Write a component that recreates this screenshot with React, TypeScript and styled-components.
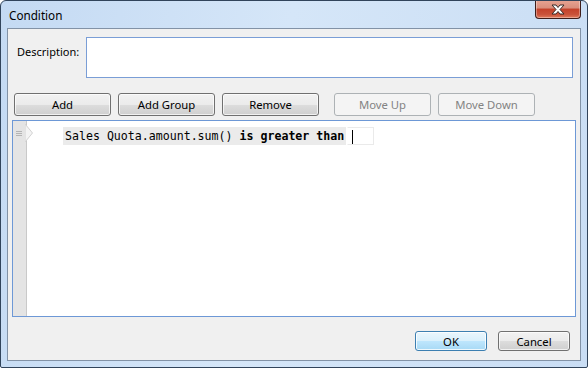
import React from 'react'
import styled, { createGlobalStyle, css } from 'styled-components'

const Global = createGlobalStyle`
  html, body {
    margin: 0;
    padding: 0;
    background: #fff;
  }
  body {
    font-family: "Noto Sans", "Open Sans", sans-serif;
    font-size: 12px;
  }
`

const Window = styled.div`
  width: 588px;
  height: 368px;
  box-sizing: border-box;
  border: 1px solid #31445b;
  border-radius: 6px 6px 2px 2px;
  background: linear-gradient(100deg, #c4daf3 0%, #d5e6f8 45%, #c9ddf4 100%);
  display: flex;
  flex-direction: column;
  padding: 0 6px 6px;
  overflow: hidden;
`

const TitleBar = styled.div`
  height: 27px;
  display: flex;
  align-items: flex-start;
  position: relative;
`

const Title = styled.span`
  margin: 6px 0 0 2px;
  font-size: 11.7px;
  color: #000;
`

const CloseButton = styled.div`
  position: absolute;
  top: -1px;
  right: 0;
  width: 46px;
  height: 19px;
  box-sizing: border-box;
  border: 1px solid #3e1d1a;
  border-top: none;
  border-radius: 0 0 4px 4px;
  background: linear-gradient(#e8a493 0%, #d98e7c 45%, #c4412a 50%, #c9523a 80%, #e07a5c 100%);
  box-shadow: inset 0 0 0 1px rgba(255, 255, 255, 0.35);
  display: flex;
  align-items: center;
  justify-content: center;
`

const Client = styled.div`
  flex: 1;
  border: 1px solid #8292a6;
  background: #f0f0f0;
  display: flex;
  flex-direction: column;
  padding: 8px 7px 9px 5px;
`

const DescRow = styled.div`
  display: flex;
  align-items: flex-start;
  padding-left: 4px;
`

const Label = styled.label`
  width: 69px;
  margin-top: 7px;
  font-size: 11px;
  color: #000;
`

const TextBox = styled.div`
  flex: 1;
  height: 41px;
  box-sizing: border-box;
  border: 1px solid #7a9ed6;
  background: #fff;
`

const ButtonRow = styled.div`
  display: flex;
  gap: 7px;
  margin: 15px 0 0 1px;
`

const Button = styled.button<{ $primary?: boolean; $wide?: boolean; $apart?: boolean }>`
  width: ${p => (p.$wide ? '97px' : '72px')};
  height: ${p => (p.$wide ? '23px' : '20px')};
  margin-left: ${p => (p.$apart ? '8px' : '0')};
  box-sizing: border-box;
  padding: 0;
  font-family: "Noto Sans", "Open Sans", sans-serif;
  font-size: 11.3px;
  color: #000;
  border: 1px solid #707070;
  border-radius: 3px;
  background: linear-gradient(#f2f2f2 0%, #ebebeb 50%, #dddddd 51%, #cfcfcf 100%);
  box-shadow: inset 0 0 0 1px rgba(255, 255, 255, 0.7);
  ${p =>
    p.$primary &&
    css`
      border-color: #3c7fb1;
      background: linear-gradient(#eaf6fd 0%, #d9f0fc 50%, #bee6fd 51%, #a7d9f5 100%);
      box-shadow: inset 0 0 0 1px rgba(255, 255, 255, 0.8);
    `}
  &:disabled {
    color: #838383;
    border-color: #adb2b5;
    background: #f4f4f4;
    box-shadow: none;
  }
`

const Editor = styled.div`
  margin: 4px -3px 0 -1px;
  height: 197px;
  box-sizing: border-box;
  border: 1px solid #6d98d6;
  background: #fff;
  display: flex;
`

const Gutter = styled.div`
  width: 13px;
  background: #e4e4e4;
  border-right: 1px solid #c9c9c9;
  position: relative;
`

const Grip = styled.svg`
  position: absolute;
  top: 10px;
  left: 3px;
`

const RowArrow = styled.svg`
  position: absolute;
  top: 2px;
  left: 12px;
`

const Lines = styled.div`
  flex: 1;
  padding: 6px 0 0 36px;
`

const Line = styled.div`
  display: flex;
  align-items: center;
  font-family: "DejaVu Sans Mono", "Liberation Mono", monospace;
  font-size: 11.6px;
  color: #000;
`

const Expr = styled.span`
  background: #ebebeb;
  height: 18px;
  line-height: 18px;
  padding: 0 2px;
`

const Op = styled.b`
  font-weight: bold;
`

const ValueBox = styled.span`
  width: 27px;
  height: 18px;
  box-sizing: border-box;
  border: 1px solid #eaeaea;
  border-left-color: #fff;
  background: #fff;
  position: relative;
  margin-left: 1px;
  &::before {
    content: '';
    position: absolute;
    left: 4px;
    top: 2px;
    width: 1px;
    height: 14px;
    background: #000;
  }
`

const Footer = styled.div`
  margin-top: auto;
  display: flex;
  justify-content: flex-end;
  gap: 11px;
  padding-right: 3px;
`

export default function App() {
  return (
    <>
      <Global />
      <Window>
        <TitleBar>
          <Title>Condition</Title>
          <CloseButton>
            <svg width="16" height="11" viewBox="0 0 16 11">
              <path
                d="M2 1 H6 L8 3.5 L10 1 H14 L10 5.5 L14 10 H10 L8 7.5 L6 10 H2 L6 5.5 Z"
                fill="#fff"
                stroke="#3a2a28"
                strokeWidth="1"
                strokeLinejoin="round"
              />
            </svg>
          </CloseButton>
        </TitleBar>
        <Client>
          <DescRow>
            <Label>Description:</Label>
            <TextBox />
          </DescRow>
          <ButtonRow>
            <Button $wide>Add</Button>
            <Button $wide>Add Group</Button>
            <Button $wide>Remove</Button>
            <Button $wide $apart disabled>Move Up</Button>
            <Button $wide disabled>Move Down</Button>
          </ButtonRow>
          <Editor>
            <Gutter>
              <Grip width="6" height="5" viewBox="0 0 6 5">
                <path d="M0 0.5 H6 M0 2.5 H6 M0 4.5 H6" stroke="#b4b4b4" strokeWidth="1" />
              </Grip>
              <RowArrow width="9" height="20" viewBox="0 0 9 20">
                <path d="M0 1.5 L0.5 1.5 L7.5 10 L0.5 18.5 L0 18.5 Z" fill="#f4f4f4" stroke="#d2d2d2" strokeWidth="1" />
              </RowArrow>
            </Gutter>
            <Lines>
              <Line>
                <Expr>
                  Sales Quota.amount.sum() <Op>is greater than</Op>
                </Expr>
                <ValueBox />
              </Line>
            </Lines>
          </Editor>
          <Footer>
            <Button $primary>OK</Button>
            <Button>Cancel</Button>
          </Footer>
        </Client>
      </Window>
    </>
  )
}
